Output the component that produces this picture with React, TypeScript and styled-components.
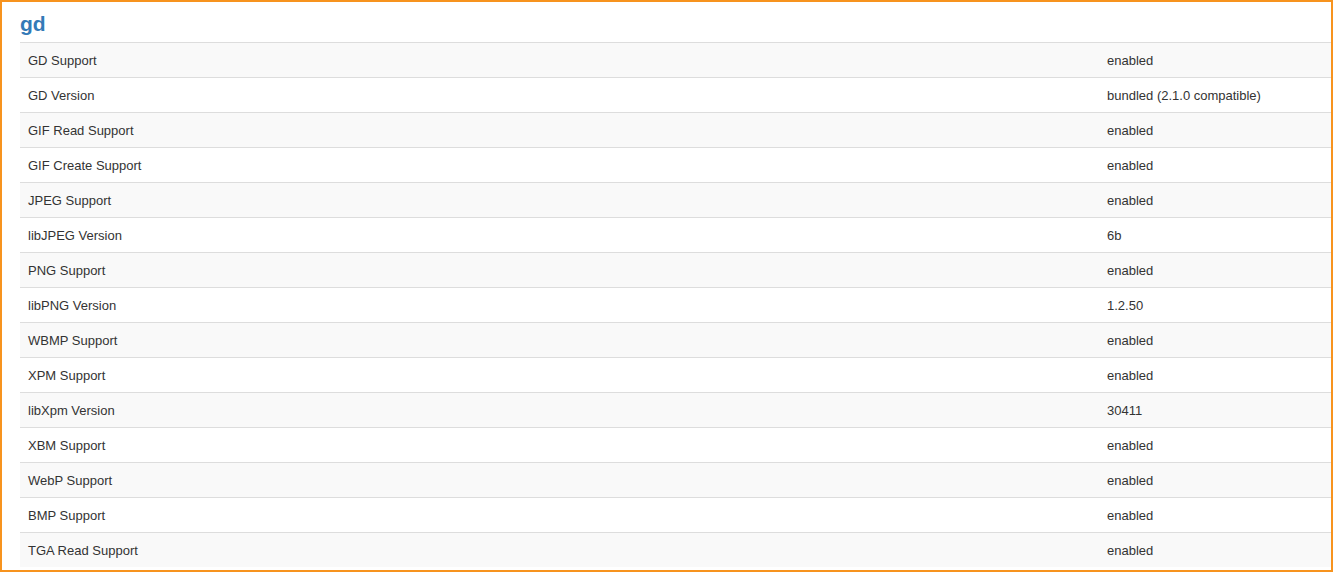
import styled, { createGlobalStyle } from 'styled-components';

const GlobalStyle = createGlobalStyle`
  * {
    box-sizing: border-box;
  }
  body {
    margin: 0;
    background: #fff;
    font-family: "Liberation Sans", Arial, Helvetica, sans-serif;
    color: #333;
  }
`;

// Orange frame around the module block
const Frame = styled.section`
  width: 1333px;
  height: 572px;
  border: 2px solid #f7931e;
  padding: 0 0 0 18px;
  overflow: hidden;
  background: #fff;
`;

const Title = styled.h2`
  margin: 0;
  height: 40px;
  padding-top: 10px;
  font-size: 21px;
  line-height: 24px;
  font-weight: 700;
  color: #337ab7;
`;

const Table = styled.div`
  display: flex;
  flex-direction: column;
`;

const Row = styled.div<{ $striped: boolean }>`
  display: grid;
  grid-template-columns: 1079px 1fr;
  border-top: 1px solid #ddd;
  background: ${({ $striped }) => ($striped ? '#f9f9f9' : '#fff')};
`;

const Cell = styled.div`
  padding: 9px 8px 7px;
  font-size: 13px;
  line-height: 18px;
  color: #333;
`;

const rows: [string, string][] = [
  ['GD Support', 'enabled'],
  ['GD Version', 'bundled (2.1.0 compatible)'],
  ['GIF Read Support', 'enabled'],
  ['GIF Create Support', 'enabled'],
  ['JPEG Support', 'enabled'],
  ['libJPEG Version', '6b'],
  ['PNG Support', 'enabled'],
  ['libPNG Version', '1.2.50'],
  ['WBMP Support', 'enabled'],
  ['XPM Support', 'enabled'],
  ['libXpm Version', '30411'],
  ['XBM Support', 'enabled'],
  ['WebP Support', 'enabled'],
  ['BMP Support', 'enabled'],
  ['TGA Read Support', 'enabled'],
];

const App = () => {
  return (
    <>
      <GlobalStyle />
      <Frame>
        <Title>gd</Title>
        <Table>
          {rows.map(([name, value], i) => (
            <Row key={name} $striped={i % 2 === 0}>
              <Cell>{name}</Cell>
              <Cell>{value}</Cell>
            </Row>
          ))}
        </Table>
      </Frame>
    </>
  );
};

export default App;
